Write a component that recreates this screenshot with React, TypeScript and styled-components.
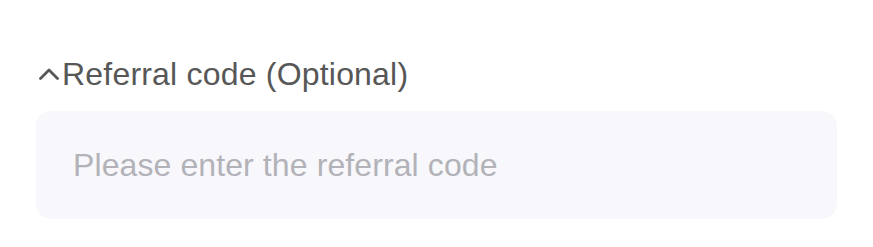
import React from 'react';
import styled, {createGlobalStyle} from "styled-components";

const GlobalStyle = createGlobalStyle`
    body {
        margin: 0;
        background: #ffffff;
        font-family: "Liberation Sans", Arial, sans-serif;
    }
`

const Page = styled.div`
    display: flex;
    flex-direction: column;
    padding: 54px 0 0 36px;
    width: 801px;
`

const Toggle = styled.button`
    display: flex;
    align-items: center;
    gap: 3px;
    height: 40px;
    padding: 0 0 0 3px;
    border: none;
    background: none;
    font-family: inherit;
    font-size: 32px;
    line-height: 40px;
    letter-spacing: 0.2px;
    color: #575757;
    cursor: pointer;
`

const Chevron = styled.svg`
    width: 20px;
    height: 12px;
    margin-top: -1px;
`

const CodeInput = styled.input`
    margin-top: 17px;
    height: 108px;
    box-sizing: border-box;
    padding: 0 0 0 37px;
    border: none;
    outline: none;
    border-radius: 15px;
    background: #f8f8fc;
    font-family: inherit;
    font-size: 32px;
    letter-spacing: 0.1px;
    color: #333333;

    &::placeholder {
        color: #b2b2b8;
    }
`

export default function App() {
    return (
        <>
            <GlobalStyle/>
            <Page>
                <Toggle>
                    <Chevron viewBox="0 0 20 12">
                        <path d="M1.5 10.5 L10 2 L18.5 10.5" fill="none" stroke="#575757" strokeWidth="2.8"
                              strokeLinecap="round" strokeLinejoin="round"/>
                    </Chevron>
                    Referral code (Optional)
                </Toggle>
                <CodeInput placeholder="Please enter the referral code"/>
            </Page>
        </>
    )
}
